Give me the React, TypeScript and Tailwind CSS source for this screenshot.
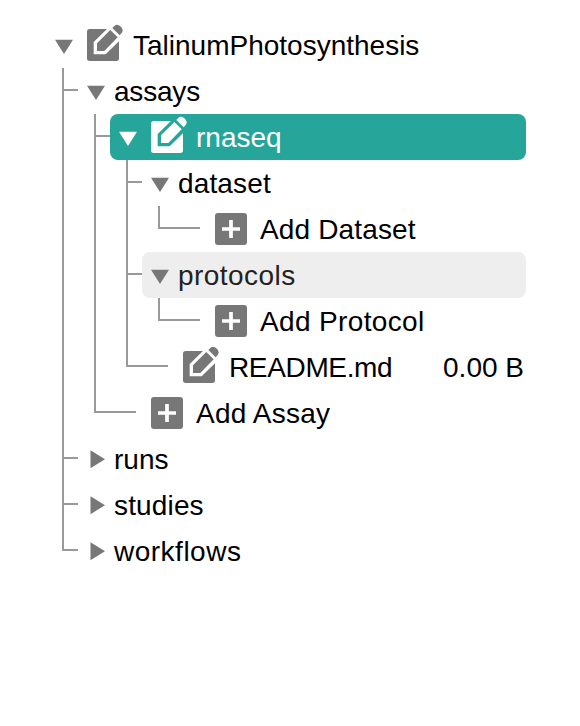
import type { ReactNode } from "react";

type Guide = "line" | "tee" | "end" | "leafEnd";

const guideClasses: Record<Guide, string> = {
  line: "w-8 h-full",
  tee: "w-4 h-full",
  end: "w-4 h-[23px] border-b-2",
  leafEnd: "w-[42px] h-[23px] border-b-2",
};

function GuideCell({ kind }: { kind: Guide }) {
  return (
    <div className={`shrink-0 border-l-2 border-[#999] ${guideClasses[kind]}`}>
      {kind === "tee" && <div className="h-[23px] border-b-2 border-[#999]" />}
    </div>
  );
}

function Arrow({ open }: { open: boolean }) {
  return (
    <svg className="mx-[9px] h-[18px] w-[18px] shrink-0" viewBox="0 0 18 18" fill="currentColor">
      <path d={open ? "M0 3.7H18L9 18Z" : "M3.5 0.2V18.2L18 9.2Z"} />
    </svg>
  );
}

function EditIcon() {
  return (
    <svg className="mb-[5px] h-[37px] w-9 shrink-0" viewBox="0 0 108 111" fill="currentColor">
      <path d="M8 15H60L20 54V91H56L96 52V103Q96 111 88 111H8Q0 111 0 103V23Q0 15 8 15Z" />
      <path d="M30 58L70 18L92 40L52 81H30Z" />
      <path d="M76 12L82 6Q91 -2 100 7Q112 17 104 27L98 34Z" />
    </svg>
  );
}

function AddIcon() {
  return (
    <svg className="h-8 w-8 shrink-0" viewBox="0 0 32 32">
      <rect width="32" height="32" rx="3" fill="currentColor" />
      <path d="M16 7V25M7 16H25" stroke="white" strokeWidth="3.7" />
    </svg>
  );
}

interface RowProps {
  guides?: Guide[];
  label: string;
  open?: boolean;
  icon?: "edit" | "add";
  tone?: "plain" | "active" | "hover";
  spacing?: string;
  children?: ReactNode;
}

function Row({ guides = [], label, open, icon, tone = "plain", spacing = "", children }: RowProps) {
  const leaf = open === undefined;
  const colors = {
    plain: "text-black",
    active: "bg-[#26a69a] text-white",
    hover: "bg-[#eee] text-[#222]",
  }[tone];
  return (
    <div className={`flex h-[46px] ${guides.length ? "pl-4" : ""}`}>
      {guides.map((guide, i) => (
        <GuideCell key={i} kind={guide} />
      ))}
      <div className={`flex min-w-0 flex-1 items-center rounded-lg ${colors}`}>
        <div className={`flex items-center ${tone === "active" ? "text-white" : "text-[#777]"}`}>
          {!leaf && <Arrow open={open} />}
          {icon && (
            <div className={`flex h-[46px] items-center ${leaf ? "ml-[15px]" : "ml-[5px]"} ${icon === "edit" ? "mr-[9px]" : "mr-[13px]"}`}>
              {icon === "edit" ? <EditIcon /> : <AddIcon />}
            </div>
          )}
        </div>
        <span className={`whitespace-pre pt-[2px] ${spacing}`}>{label}</span>
        {children}
      </div>
    </div>
  );
}

export default function App() {
  return (
    <main className="h-[726px] w-[580px] bg-white pl-[46px] pr-[54px] pt-[22px] font-['Liberation_Sans',Arial,sans-serif] text-[28px] leading-[46px]">
      <Row open icon="edit" label="TalinumPhotosynthesis" spacing="pl-px" />
      <Row guides={["tee"]} open label="assays" spacing="tracking-[-0.2px]" />
      <Row guides={["line", "tee"]} open icon="edit" label="rnaseq" tone="active" />
      <Row guides={["line", "line", "tee"]} open label="dataset" spacing="tracking-[0.15px]" />
      <Row guides={["line", "line", "line", "leafEnd"]} icon="add" label="Add Dataset" spacing="tracking-[0.15px]" />
      <Row guides={["line", "line", "tee"]} open label="protocols" tone="hover" spacing="tracking-[0.45px]" />
      <Row guides={["line", "line", "line", "leafEnd"]} icon="add" label="Add Protocol" spacing="tracking-[0.36px]" />
      <Row guides={["line", "line", "leafEnd"]} icon="edit" label="README.md" spacing="pl-px tracking-[-0.35px]">
        <span className="ml-auto pr-[2px] pt-[2px]">0.00 B</span>
      </Row>
      <Row guides={["line", "leafEnd"]} icon="add" label="Add Assay" spacing="tracking-[0.2px]" />
      <Row guides={["tee"]} open={false} label="runs" />
      <Row guides={["tee"]} open={false} label="studies" spacing="tracking-[0.15px]" />
      <Row guides={["end"]} open={false} label="workflows" spacing="tracking-[0.5px]" />
    </main>
  );
}
